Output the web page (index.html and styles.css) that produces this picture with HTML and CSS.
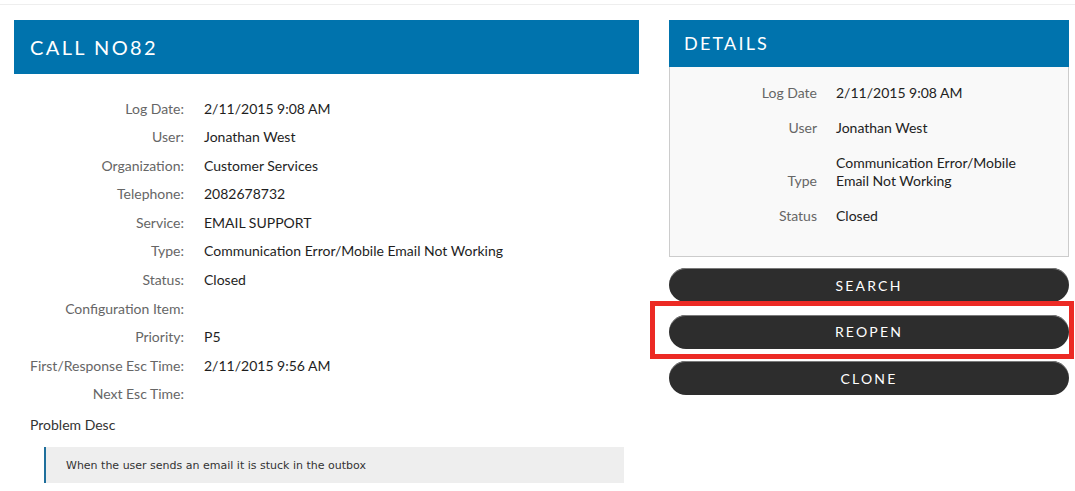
FILE: index.html
```html
<!DOCTYPE html>
<html>
<head>
<meta charset="utf-8">
<link rel="stylesheet" href="styles.css">
</head>
<body>
<div class="topbar"></div>
<div class="page">
  <main class="main">
    <h1 class="band band-main">CALL NO82</h1>
    <div class="fields">
      <div class="lbl">Log Date:</div><div class="val">2/11/2015 9:08 AM</div>
      <div class="lbl">User:</div><div class="val">Jonathan West</div>
      <div class="lbl">Organization:</div><div class="val">Customer Services</div>
      <div class="lbl">Telephone:</div><div class="val">2082678732</div>
      <div class="lbl">Service:</div><div class="val">EMAIL SUPPORT</div>
      <div class="lbl">Type:</div><div class="val">Communication Error/Mobile Email Not Working</div>
      <div class="lbl">Status:</div><div class="val">Closed</div>
      <div class="lbl">Configuration Item:</div><div class="val"></div>
      <div class="lbl">Priority:</div><div class="val">P5</div>
      <div class="lbl">First/Response Esc Time:</div><div class="val">2/11/2015 9:56 AM</div>
      <div class="lbl">Next Esc Time:</div><div class="val"></div>
    </div>
    <div class="desc-title">Problem Desc</div>
    <blockquote class="desc">When the user sends an email it is stuck in the outbox</blockquote>
  </main>
  <aside class="side">
    <h2 class="band band-side">DETAILS</h2>
    <div class="details">
      <div class="drow"><div class="dlbl">Log Date</div><div class="dval">2/11/2015 9:08 AM</div></div>
      <div class="drow"><div class="dlbl">User</div><div class="dval">Jonathan West</div></div>
      <div class="drow"><div class="dlbl">Type</div><div class="dval">Communication Error/Mobile Email Not Working</div></div>
      <div class="drow"><div class="dlbl">Status</div><div class="dval">Closed</div></div>
    </div>
    <div class="actions">
      <button class="btn">SEARCH</button>
      <button class="btn">REOPEN</button>
      <button class="btn">CLONE</button>
    </div>
  </aside>
</div>
<div class="highlight"></div>
</body>
</html>
```
FILE: styles.css
```css
* { box-sizing: border-box; }
html, body { margin: 0; padding: 0; background: #fff; }
body {
  font-family: Lato, "Open Sans", sans-serif;
  font-size: 14px;
  color: #222;
  position: relative;
  width: 1075px;
  height: 491px;
  overflow: hidden;
}
.topbar {
  height: 5px;
  border-bottom: 1px solid #eeeeee;
}
.page {
  display: flex;
  gap: 30px;
  padding: 15px 0 0 14px;
}
.main { width: 625px; }
.side { width: 400px; }
.band {
  margin: 0;
  background: #0073ad;
  color: #fff;
  font-weight: 400;
  display: flex;
  align-items: center;
}
.band-main {
  height: 54px;
  padding-left: 16px;
  padding-bottom: 1px;
  font-size: 20px;
  letter-spacing: 2.4px;
}
.band-side {
  height: 47px;
  padding-left: 15px;
  padding-bottom: 1px;
  font-size: 18px;
  letter-spacing: 2.2px;
}
.fields {
  display: grid;
  grid-template-columns: 170px 1fr;
  column-gap: 20px;
  margin-top: 20.5px;
  line-height: 28.6px;
}
.lbl { text-align: right; color: #666; }
.val { color: #1e1e1e; min-height: 28.6px; }
.desc-title {
  margin-top: 6px;
  padding-left: 16px;
  line-height: 20px;
  color: #333;
}
.desc {
  margin: 12px 15px 0 30px;
  background: #eeeeee;
  border-left: 2px solid #1f6f9c;
  height: 36px;
  padding: 0 0 0 20px;
  display: flex;
  align-items: center;
  font-family: "DejaVu Sans", Verdana, sans-serif;
  font-size: 11px;
  color: #333;
}
.details {
  background: #f9f9f9;
  border: 1px solid #cccccc;
  border-top: none;
  padding: 8px 30px 23px 0;
  line-height: 18px;
}
.drow {
  display: grid;
  grid-template-columns: 147px 1fr;
  column-gap: 19px;
  align-items: end;
  padding: 8.5px 0;
}
.dlbl { text-align: right; color: #666; }
.dval { color: #222; }
.actions {
  display: flex;
  flex-direction: column;
  gap: 12.5px;
  margin-top: 11px;
}
.btn {
  height: 34px;
  border: none;
  border-radius: 17px;
  background: #2d2d2d;
  box-shadow: inset 0 1px 0 #7a7a7a;
  color: #fff;
  font-family: Lato, sans-serif;
  font-size: 14px;
  letter-spacing: 2.2px;
  padding: 0;
  cursor: pointer;
}
.highlight {
  position: absolute;
  left: 650px;
  top: 301px;
  width: 424px;
  height: 58px;
  border: 5px solid #ec2a24;
  pointer-events: none;
}
```
